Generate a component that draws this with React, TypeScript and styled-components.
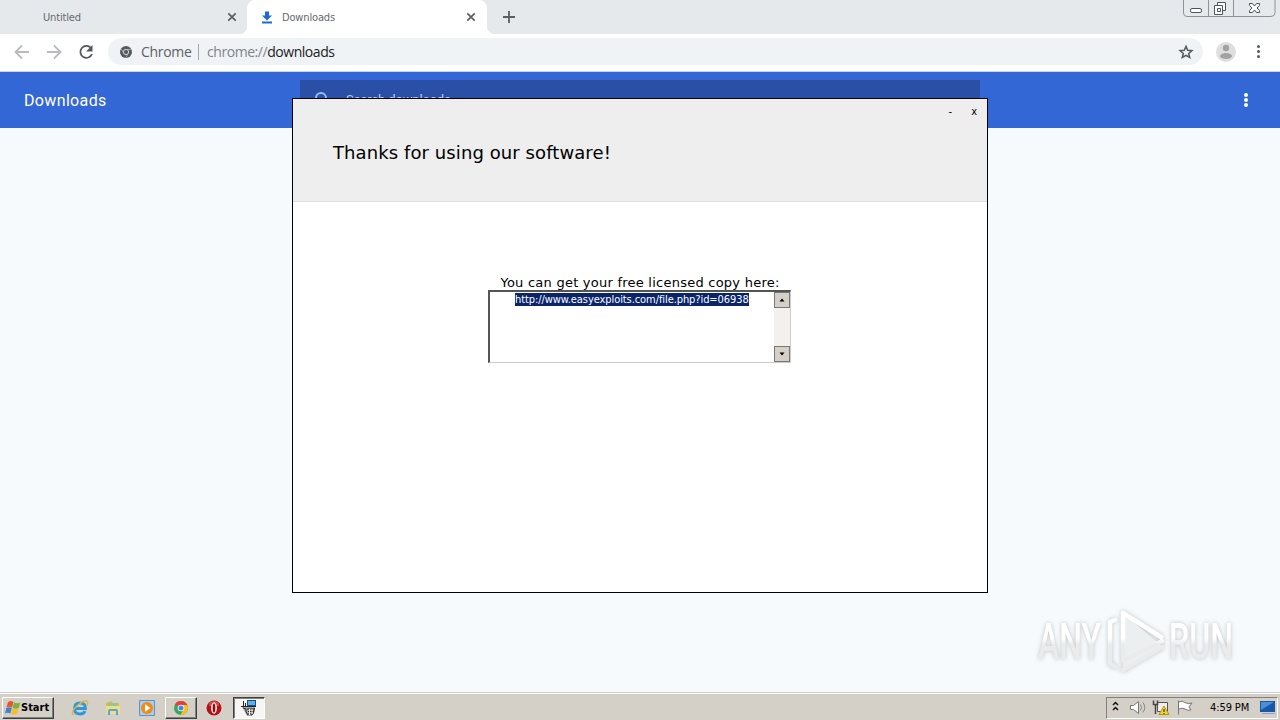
import React from "react";
import styled, { createGlobalStyle } from "styled-components";

export default function App() {
  return (
    <Desktop>
      <GlobalStyle />
      <TabStrip>
        <Tab $width={247}>
          <TabTitle $left={43}>Untitled</TabTitle>
          <CloseIcon $right={10} />
        </Tab>
        <Tab $active $width={240}>
          <DownloadIcon />
          <TabTitle $left={35}>Downloads</TabTitle>
          <CloseIcon $right={11} />
        </Tab>
        <NewTab>
          <svg width="44" height="34" fill="none" stroke="#5b5e62" strokeWidth="1.800">
            <path d="M16 17h12M22 11v12" />
          </svg>
        </NewTab>
        <WindowControls>
          <svg width="94" height="18" fill="none" stroke="#8e9399">
            <path d="M.5 0v13q0 3.500 3.500 3.500h84q4 0 4-4V0M25.500 0v16M50.500 0v16" />
            <g stroke="#50555c" fill="#fbfcfd">
              <rect x="7.500" y="8.500" width="11" height="4" rx="1.500" />
              <path d="M34.500 2.500h8v8h-8z" />
              <path d="M31.500 5.500h8v9h-8z" />
              <path d="M34.500 8.500h3v3h-3z" />
              <path d="M66.500 3.500h3l2 2.500 2-2.500h3v2l-2.500 2.500 2.500 2.500v2h-3l-2-2.500-2 2.500h-3v-2l2.500-2.500-2.500-2.500z" />
            </g>
          </svg>
        </WindowControls>
      </TabStrip>

      <Toolbar>
        <NavIcons>
          <svg width="108" height="37" fill="none" strokeWidth="1.800">
            <path d="M29 19H16M22 12.500L15.500 19l6.500 6.500" stroke="#b9bbbe" />
            <path d="M47 19h13M54 12.500l6.500 6.500-6.500 6.500" stroke="#b9bbbe" />
            <path d="M91 15a6 6 0 1 0 1 6" stroke="#55585c" />
            <path d="M92.500 12v6.500H86z" fill="#55585c" />
          </svg>
        </NavIcons>
        <AddressBar>
          <ChromeMono />
          <SiteName>Chrome</SiteName>
          <Divider />
          <Address>
            chrome://<b>downloads</b>
          </Address>
          <StarIcon />
        </AddressBar>
        <Avatar>
          <svg width="20" height="20" fill="#a2a2a2">
            <circle cx="10" cy="6" r="3.200" />
            <ellipse cx="10" cy="14" rx="6" ry="3" />
          </svg>
        </Avatar>
        <Dots $color="#55585c" $size={3} $gap={2} />
      </Toolbar>

      <PageHeader>
        <PageTitle>Downloads</PageTitle>
        <SearchBox>
          <svg width="18" height="18" fill="none" stroke="#9cbaf1" strokeWidth="2">
            <circle cx="7" cy="7" r="5" />
            <path d="M11 11l5 5" />
          </svg>
          <span>Search downloads</span>
        </SearchBox>
        <MenuSlot>
          <Dots $color="#fff" $size={4} $gap={1} />
        </MenuSlot>
      </PageHeader>

      <PageBody />

      <Dialog>
        <DialogHeader>
          <DialogControls>
            <span>-</span>
            <span>x</span>
          </DialogControls>
          <DialogTitle>Thanks for using our software!</DialogTitle>
        </DialogHeader>
        <DialogBody>
          <Label>You can get your free licensed copy here:</Label>
          <LinkBox>
            <LinkArea>
              <Selected>http://www.easyexploits.com/file.php?id=06938</Selected>
            </LinkArea>
            <Scrollbar>
              <ScrollButton>
                <svg width="7" height="4">
                  <path d="M0.500 3.500h5l-2.500-3z" />
                </svg>
              </ScrollButton>
              <ScrollButton>
                <svg width="7" height="4">
                  <path d="M0.500 0.500h5l-2.500 3z" />
                </svg>
              </ScrollButton>
            </Scrollbar>
          </LinkBox>
        </DialogBody>
      </Dialog>

      <Watermark />

      <Taskbar>
        <StartButton>
          <WindowsFlag />
          <span>Start</span>
        </StartButton>
        <QuickItem $width={32} $left={10}>
          <IeIcon />
        </QuickItem>
        <QuickItem $width={34}>
          <FolderIcon />
        </QuickItem>
        <QuickItem $width={34}>
          <PlayerIcon />
        </QuickItem>
        <TaskButton $left={1}>
          <ChromeIcon />
        </TaskButton>
        <QuickItem $width={34}>
          <OperaIcon />
        </QuickItem>
        <TaskButton $pressed $left={2}>
          <InstallerIcon />
        </TaskButton>
        <Tray>
          <TrayIcons />
          <Clock>4:59 PM</Clock>
          <svg width="18" height="16">
            <path d="M1 1h15v11H1z" fill="#1b57a8" />
            <path d="M2 2h13L2 10z" fill="#4b8ed8" />
            <path d="M3 13h13v1H3z" fill="#8aa3c2" />
          </svg>
        </Tray>
      </Taskbar>
    </Desktop>
  );
}

function CloseIcon({ $right }: { $right: number }) {
  return (
    <CloseSlot $right={$right}>
      <svg width="10" height="10" stroke="#5b5e62" strokeWidth="1.700">
        <path d="M1.300 1.300l7.400 7.400M8.700 1.300L1.300 8.700" />
      </svg>
    </CloseSlot>
  );
}

function DownloadIcon() {
  return (
    <TabIcon>
      <svg width="12" height="13" fill="#1b6ad6">
        <path d="M4 0.500h4v4h3L6 9.500 1 4.500h3zM1 10.500h10v2H1z" />
      </svg>
    </TabIcon>
  );
}

function ChromeMono() {
  return (
    <svg width="12" height="12" viewBox="0 0 12 12">
      <circle cx="6" cy="6" r="6" fill="#55585c" />
      <circle cx="6" cy="6" r="2.600" fill="none" stroke="#d9dcde" />
      <path d="M6 3.400h5.300M3.700 7.200L1.200 2.900M8.300 7.200L5.800 11.600" stroke="#b4b7ba" strokeWidth=".8" />
    </svg>
  );
}

function StarIcon() {
  return (
    <svg width="16" height="16" viewBox="0 0 16 16" fill="none" stroke="#55585c" strokeWidth="1.500">
      <path d="M8 2.300l1.700 3.900 4.200.4-3.200 2.800 1 4.100L8 11.300l-3.700 2.200 1-4.100-3.200-2.800 4.200-.4z" />
    </svg>
  );
}

function Watermark() {
  return (
    <WatermarkBox>
      <svg width="240" height="80">
        <defs>
          <linearGradient id="fade" x1="0" y1="0" x2="0" y2="80" gradientUnits="userSpaceOnUse">
            <stop offset="0.440" stopColor="#fff" />
            <stop offset="0.520" stopColor="#e9ebec" />
          </linearGradient>
        </defs>
        <path d="M93 10v56l39-23z" fill="#eceff0" />
        <g fill="url(#fade)" fontFamily="Roboto, sans-serif" fontSize="50" fontWeight="500">
          <text x="8" y="56" textLength="63" lengthAdjust="spacingAndGlyphs">ANY</text>
          <text x="139" y="56" textLength="64" lengthAdjust="spacingAndGlyphs">RUN</text>
        </g>
        <g fill="none" stroke="url(#fade)" strokeWidth="4.500" strokeLinejoin="round" strokeLinecap="round">
          <path d="M85 17l-5 2v42l6 3" />
          <path d="M131 34L93 10v48l39-20" />
          <path d="M93 67l39-23" />
        </g>
      </svg>
    </WatermarkBox>
  );
}

function WindowsFlag() {
  return (
    <svg width="16" height="16" viewBox="0 0 16 16">
      <path d="M3 2q3-2 5.500 0L7 7.500q-3-1.500-5.500 0z" fill="#e8552b" />
      <path d="M9 2.500q3 1.500 6.300 0L13.800 8q-3 1.500-6.300 0z" fill="#7db13c" />
      <path d="M1.300 8.100q3-1.500 5.500 0L5.300 13.500q-3-1.500-5.300 0z" fill="#3f83d3" />
      <path d="M7.300 8.500q3 1.500 6.300 0L12.100 14q-3 1.500-6.300 0z" fill="#f7bd2e" />
    </svg>
  );
}

function IeIcon() {
  return (
    <svg width="18" height="18" viewBox="0 0 18 18" fill="none">
      <path d="M4 9.500h10.500q0-5.500-5.500-5.500t-5.500 5.500 5.500 5.500q4 0 5-3" stroke="#2f98dc" strokeWidth="2.800" />
      <path d="M2.500 16Q-1 13 6.500 6.500T16 2.500q1.500 1.500-.5 4.500" stroke="#e2b63a" strokeWidth="1.400" />
    </svg>
  );
}

function FolderIcon() {
  return (
    <svg width="16" height="16" viewBox="0 0 16 16">
      <path d="M1 3l5-2 2 2h6v11H1z" fill="#dcb84e" />
      <path d="M3 3h9v3H3z" fill="#8fc98c" />
      <path d="M1 6h14v8H1z" fill="#f3dc84" />
      <path d="M3 15v-4q0-2 2-2h6q2 0 2 2v4h-2v-4H5v4z" fill="#4fa8da" />
    </svg>
  );
}

function PlayerIcon() {
  return (
    <svg width="16" height="16" viewBox="0 0 16 16">
      <path d="M.5.500h15v15H.5z" fill="#a9cdec" stroke="#5c92c6" />
      <circle cx="8" cy="8" r="6" fill="#f28a14" />
      <path d="M6 4.300v7.400L11.500 8z" fill="#fff" />
    </svg>
  );
}

function ChromeIcon() {
  return (
    <svg width="14" height="14" viewBox="0 0 14 14">
      <circle cx="7" cy="7" r="7" fill="#3aa757" />
      <path d="M7 7L1 3.400A7 7 0 0 1 13.200 4H7z" fill="#e34133" />
      <path d="M7 4h6.200A7 7 0 0 1 6.500 14L9.800 8z" fill="#fbc116" />
      <circle cx="7" cy="7" r="3.300" fill="#fff" />
      <circle cx="7" cy="7" r="2.500" fill="#4285f4" />
    </svg>
  );
}

function OperaIcon() {
  return (
    <svg width="16" height="16" viewBox="0 0 16 16">
      <circle cx="8" cy="8" r="7.500" fill="#b51218" />
      <path d="M3 3q5-4 10 0v3H3z" fill="#d7474a" />
      <ellipse cx="8" cy="8" rx="3" ry="5.800" fill="#f4e4e2" />
      <ellipse cx="8" cy="8" rx="1.300" ry="4.500" fill="#8b0c10" />
    </svg>
  );
}

function InstallerIcon() {
  return (
    <svg width="16" height="16" viewBox="0 0 16 16">
      <path d="M6 0h9v7H6z" fill="#164f8e" />
      <path d="M7 1h7v4H7z" fill="#58b4e4" />
      <path d="M2.500 1v5M4.500 3v3M0 6.500h15" stroke="#222" />
      <path d="M1 7h13l-1 5-3 4H6l-2-4z" fill="#aaa" />
      <path d="M2 8l3 1v3l2 3M6 9h7M7 11.500h6M7 14h4M13.500 8l-1 5-2 2.500" fill="none" stroke="#222" />
      <path d="M8.500 9v6M11 9v5" stroke="#f5f5f5" />
    </svg>
  );
}

function TrayIcons() {
  return (
    <svg width="90" height="20" viewBox="0 0 90 20" fill="none">
      <path d="M6 7l2.500-2.500L11 7M6 12l2.500-2.500L11 12" stroke="#111" strokeWidth="1.500" />
      <path d="M23.500 7.500h3l5-4v12l-5-4h-3z" fill="#fff" stroke="#777" />
      <path d="M33.500 6.500q2 3 0 6M36 4.500q3.500 5 0 10" stroke="#888" />
      <path d="M50.500 4.500h10v9h-10z" fill="#eee" stroke="#555" />
      <path d="M46.500 2.500v4h4v-4M48.500 7v9" stroke="#444" strokeWidth="1.500" />
      <path d="M57 8l5 8.500H52z" fill="#f4d431" stroke="#b49414" />
      <path d="M57 11v3M57 15v1" stroke="#222" />
      <path d="M71.500 2.500v14M72 4q3-2 6 .5 3 2 7 .5L82 9l2 3q-3 1-6-1-3-1.500-6 0" fill="#fff" stroke="#777" />
    </svg>
  );
}

function Dots(props: { $color: string; $size: number; $gap: number }) {
  return (
    <DotColumn {...props}>
      <i />
      <i />
      <i />
    </DotColumn>
  );
}

const GlobalStyle = createGlobalStyle`
  * {
    box-sizing: border-box;
  }
  body {
    margin: 0;
    overflow: hidden;
  }
  svg {
    display: block;
    flex: none;
  }
`;

const uiFont = `"DejaVu Sans Condensed", "DejaVu Sans", sans-serif`;

const Desktop = styled.div`
  position: relative;
  display: flex;
  flex-direction: column;
  width: 1280px;
  height: 720px;
  overflow: hidden;
  background: #f7fafc;
  font-family: "Noto Sans", sans-serif;
  white-space: nowrap;
`;

const TabStrip = styled.div`
  display: flex;
  height: 34px;
  background: #e5e9ec;
`;

const Tab = styled.div<{ $active?: boolean; $width: number }>`
  position: relative;
  display: flex;
  align-items: center;
  width: ${({ $width }) => $width}px;
  height: 34px;
  border-radius: 8px 8px 0 0;
  background: ${({ $active }) => ($active ? "#fff" : "transparent")};

  &::before,
  &::after {
    content: "";
    display: ${({ $active }) => ($active ? "block" : "none")};
    position: absolute;
    bottom: 0;
    width: 8px;
    height: 8px;
  }
  &::before {
    left: -8px;
    background: radial-gradient(circle at 0 0, transparent 8px, #fff 8.500px);
  }
  &::after {
    right: -8px;
    background: radial-gradient(circle at 100% 0, transparent 8px, #fff 8.500px);
  }
`;

const TabIcon = styled.div`
  width: 0;
  margin-left: 14px;
  margin-right: -14px;
`;

const TabTitle = styled.span<{ $left: number }>`
  margin-left: ${({ $left }) => $left}px;
  font-family: ${uiFont};
  font-size: 11px;
  letter-spacing: -0.15px;
  color: #66696d;
`;

const CloseSlot = styled.div<{ $right: number }>`
  margin-left: auto;
  margin-right: ${({ $right }) => $right}px;
`;

const NewTab = styled.div`
  width: 44px;
`;

const WindowControls = styled.div`
  margin-left: auto;
  margin-right: 3px;
`;

const Toolbar = styled.div`
  display: flex;
  align-items: center;
  height: 38px;
  padding-bottom: 2px;
  border-bottom: 1px solid #c9d3e6;
  background: #fff;
`;

const NavIcons = styled.div`
  width: 108px;
`;

const AddressBar = styled.div`
  display: flex;
  align-items: center;
  width: 1095px;
  height: 27px;
  padding: 0 9px 0 12px;
  border-radius: 14px;
  background: #f0f3f5;
  font-family: "Open Sans", sans-serif;
  font-size: 14px;
  letter-spacing: -0.45px;

  & > svg:last-child {
    margin-left: auto;
  }
`;

const SiteName = styled.span`
  width: 48px;
  margin-left: 9px;
  letter-spacing: -0.3px;
  color: #5c5f63;
`;

const Divider = styled.span`
  width: 1px;
  height: 16px;
  margin: 0 8px 0 9px;
  background: #a5a8ab;
`;

const Address = styled.span`
  color: #808387;

  b {
    font-weight: 400;
    color: #202124;
  }
`;

const Avatar = styled.div`
  width: 20px;
  height: 20px;
  margin-left: 13px;
  margin-right: 21px;
  border-radius: 50%;
  background: #dedede;
`;

const DotColumn = styled.div<{ $color: string; $size: number; $gap: number }>`
  display: flex;
  flex-direction: column;
  gap: ${({ $gap }) => $gap}px;

  i {
    width: ${({ $size }) => $size}px;
    height: ${({ $size }) => $size}px;
    border-radius: 50%;
    background: ${({ $color }) => $color};
  }
`;

const PageHeader = styled.div`
  display: flex;
  align-items: center;
  height: 56px;
  background: #3367d6;
`;

const PageTitle = styled.div`
  width: 300px;
  padding-left: 24px;
  font-family: Roboto, sans-serif;
  font-size: 16px;
  letter-spacing: 0.35px;
  color: #fff;
`;

const SearchBox = styled.div`
  display: flex;
  align-items: center;
  gap: 14px;
  width: 680px;
  height: 40px;
  padding-left: 14px;
  background: #294fa7;
  font-family: Roboto, sans-serif;
  font-size: 13px;
  letter-spacing: -0.13px;
  color: #b9ccf3;

  span {
    padding-bottom: 2px;
  }
`;

const MenuSlot = styled.div`
  margin-left: auto;
  margin-right: 32px;
`;

const PageBody = styled.div`
  flex: 1;
  background: #f7fafc;
`;

const Dialog = styled.div`
  position: absolute;
  top: 98px;
  left: 292px;
  display: flex;
  flex-direction: column;
  width: 696px;
  height: 495px;
  border: 1px solid #000;
  background: #fff;
  font-family: Verdana, "DejaVu Sans", sans-serif;
  color: #000;
`;

const DialogHeader = styled.div`
  height: 103px;
  border-bottom: 1px solid #e0e0e0;
  background: #eee;
`;

const DialogControls = styled.div`
  display: flex;
  justify-content: flex-end;
  gap: 19px;
  height: 26px;
  padding: 5px 10px 0 0;
  font-family: ${uiFont};
  font-size: 11px;
  line-height: 15px;
`;

const DialogTitle = styled.div`
  padding: 16px 0 0 40px;
  font-size: 18px;
  line-height: 24px;
  letter-spacing: 0.09px;
`;

const DialogBody = styled.div`
  display: flex;
  flex-direction: column;
  align-items: center;
  padding-top: 73px;
`;

const Label = styled.div`
  height: 15px;
  font-size: 13px;
  line-height: 15px;
  letter-spacing: 0.24px;
`;

const LinkBox = styled.div`
  display: flex;
  width: 303px;
  height: 73px;
  margin-right: 1px;
  border: 2px solid #555;
  border-right: 1px solid #ccc;
  border-bottom: 1px solid #ccc;
`;

const LinkArea = styled.div`
  flex: 1;
  padding: 1px 0 0 25px;
`;

const Selected = styled.span`
  display: block;
  width: 234px;
  height: 13px;
  background: #0a246a;
  font-family: ${uiFont};
  font-size: 11px;
  line-height: 13px;
  letter-spacing: -0.08px;
  color: #fff;
`;

const Scrollbar = styled.div`
  display: flex;
  flex-direction: column;
  justify-content: space-between;
  width: 16px;
  background: #f2f1ee;
`;

const ScrollButton = styled.div`
  display: flex;
  align-items: center;
  justify-content: center;
  height: 16px;
  border: 1px solid #777;
  background: #d4d0c8;
`;

const WatermarkBox = styled.div`
  position: absolute;
  top: 603px;
  left: 1030px;
  filter: drop-shadow(0 0 2px rgba(90, 95, 100, 0.35));
`;

const Taskbar = styled.div`
  display: flex;
  align-items: center;
  height: 28px;
  padding: 2px 2px 0 2px;
  border-top: 1px solid #d4d0c8;
  box-shadow: inset 0 1px #fff;
  background: #d4d0c8;
`;

const StartButton = styled.div`
  display: flex;
  align-items: center;
  width: 52px;
  height: 22px;
  padding-left: 2px;
  border: 1px solid;
  border-color: #fff #404040 #404040 #fff;
  box-shadow: inset -1px -1px #808080;
  font-family: ${uiFont};
  font-size: 11px;
  font-weight: bold;
  color: #000;
`;

const QuickItem = styled.div<{ $width: number; $left?: number }>`
  display: flex;
  justify-content: center;
  width: ${({ $width }) => $width}px;
  margin-left: ${({ $left = 0 }) => $left}px;
`;

const TaskButton = styled.div<{ $pressed?: boolean; $left: number }>`
  display: flex;
  align-items: center;
  justify-content: center;
  width: 32px;
  height: 22px;
  margin-left: ${({ $left }) => $left}px;
  border: 1px solid;
  border-color: ${({ $pressed }) =>
    $pressed ? "#404040 #fff #fff #404040" : "#fff #404040 #404040 #fff"};
  box-shadow: ${({ $pressed }) =>
    $pressed ? "inset 1px 1px #808080" : "inset -1px -1px #808080"};
  background: ${({ $pressed }) => ($pressed ? "#f7f6f4" : "#d4d0c8")};
`;

const Tray = styled.div`
  display: flex;
  align-items: center;
  width: 172px;
  height: 22px;
  margin-left: auto;
  border: 1px solid;
  border-color: #808080 #fff #fff #808080;
`;

const Clock = styled.span`
  width: 49px;
  margin-left: 13px;
  font-family: ${uiFont};
  font-size: 11px;
  letter-spacing: -0.1px;
  color: #000;
`;
